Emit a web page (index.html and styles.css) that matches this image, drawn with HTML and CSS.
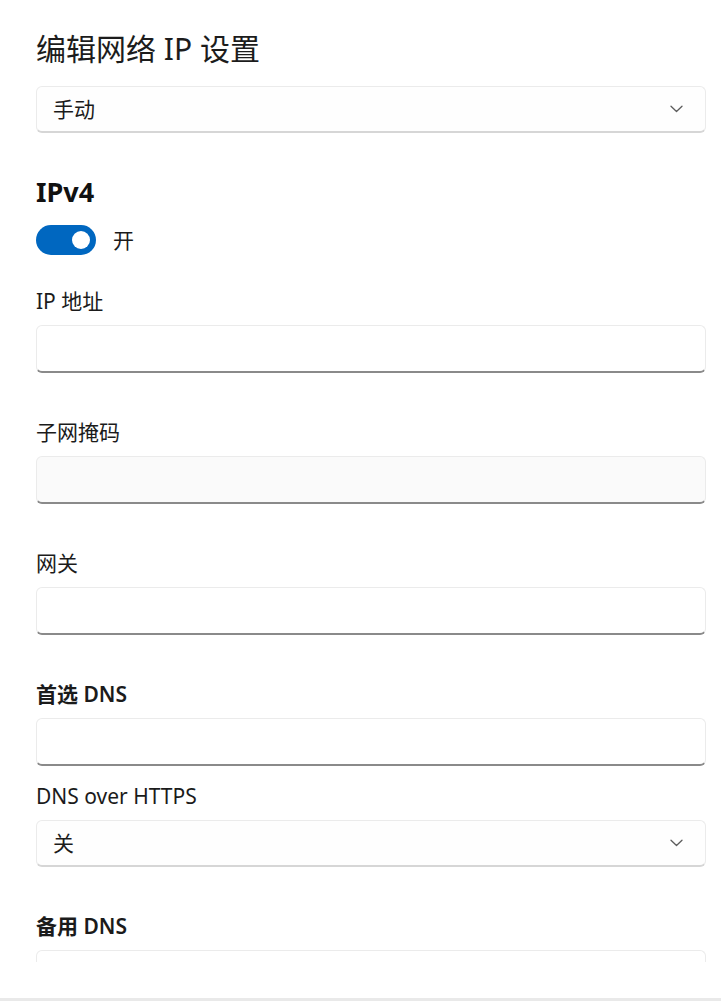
FILE: index.html
```html
<!DOCTYPE html>
<html lang="zh-CN">
<head>
<meta charset="utf-8">
<title>编辑网络 IP 设置</title>
<link rel="stylesheet" href="styles.css">
</head>
<body>
<div class="scroll">
  <h1 class="title">编辑网络 IP 设置</h1>
  <div class="combo combo-mode">
    <span class="combo-text">手动</span>
    <svg class="chev" width="13" height="8" viewBox="0 0 13 8"><path d="M1 1.2 L6.5 6.5 L12 1.2" fill="none" stroke="#5c5c5c" stroke-width="1.3" stroke-linecap="round" stroke-linejoin="round"/></svg>
  </div>
  <h2 class="section">IPv4</h2>
  <div class="toggle-row">
    <span class="toggle"><span class="knob"></span></span>
    <span class="toggle-text">开</span>
  </div>
  <div class="field first">
    <div class="label">IP 地址</div>
    <div class="input"></div>
  </div>
  <div class="field">
    <div class="label">子网掩码</div>
    <div class="input input-dim"></div>
  </div>
  <div class="field">
    <div class="label">网关</div>
    <div class="input"></div>
  </div>
  <div class="field">
    <div class="label strong">首选 DNS</div>
    <div class="input"></div>
  </div>
  <div class="field tight">
    <div class="label">DNS over HTTPS</div>
    <div class="combo">
      <span class="combo-text">关</span>
      <svg class="chev" width="13" height="8" viewBox="0 0 13 8"><path d="M1 1.2 L6.5 6.5 L12 1.2" fill="none" stroke="#5c5c5c" stroke-width="1.3" stroke-linecap="round" stroke-linejoin="round"/></svg>
    </div>
  </div>
  <div class="field">
    <div class="label strong">备用 DNS</div>
    <div class="input"></div>
  </div>
</div>
<div class="footer"></div>
</body>
</html>
```
FILE: styles.css
```css
html, body {
  margin: 0;
  padding: 0;
  background: #ffffff;
}
body {
  font-family: "Noto Sans", "Noto Sans CJK SC", sans-serif;
  color: #1b1b1b;
  width: 721px;
  overflow: hidden;
}
.scroll {
  height: 962px;
  overflow: hidden;
  box-sizing: border-box;
  padding: 29px 15px 0 36px;
}
.title {
  margin: 0;
  font-size: 30px;
  font-weight: 400;
  line-height: 40px;
  color: #1c1c1c;
}
.combo {
  height: 47px;
  box-sizing: border-box;
  border: 1px solid #ebebeb;
  border-bottom: 2px solid #d6d6d6;
  border-radius: 6px;
  background: #fefefe;
  display: flex;
  align-items: center;
  justify-content: space-between;
  padding: 0 22px 0 16px;
}
.combo-mode {
  margin-top: 17px;
}
.combo-text {
  font-size: 21px;
  line-height: 28px;
}
.chev {
  display: block;
}
.section {
  margin: 41px 0 0 0;
  font-size: 27px;
  font-weight: 700;
  line-height: 36px;
  color: #111;
}
.toggle-row {
  margin-top: 15px;
  display: flex;
  align-items: center;
  gap: 17px;
}
.toggle {
  width: 60px;
  height: 30px;
  border-radius: 15px;
  background: #0067c0;
  display: flex;
  align-items: center;
  justify-content: flex-end;
  padding-right: 6px;
  box-sizing: border-box;
}
.knob {
  width: 18px;
  height: 18px;
  border-radius: 50%;
  background: #ffffff;
}
.toggle-text {
  font-size: 21px;
  line-height: 28px;
}
.field {
  margin-top: 45px;
}
.field.first {
  margin-top: 32px;
}
.field.tight {
  margin-top: 16px;
}
.label {
  font-size: 21px;
  line-height: 28px;
  margin-bottom: 10px;
}
.label.strong {
  font-weight: 600;
}
.input {
  height: 48px;
  box-sizing: border-box;
  border: 1px solid #ebebeb;
  border-bottom: 2px solid #8a8a8a;
  border-radius: 6px;
  background: #ffffff;
}
.input-dim {
  background: #fafafa;
}
.footer {
  margin-top: 36px;
  height: 40px;
  background: #e9e9e9;
}
```
